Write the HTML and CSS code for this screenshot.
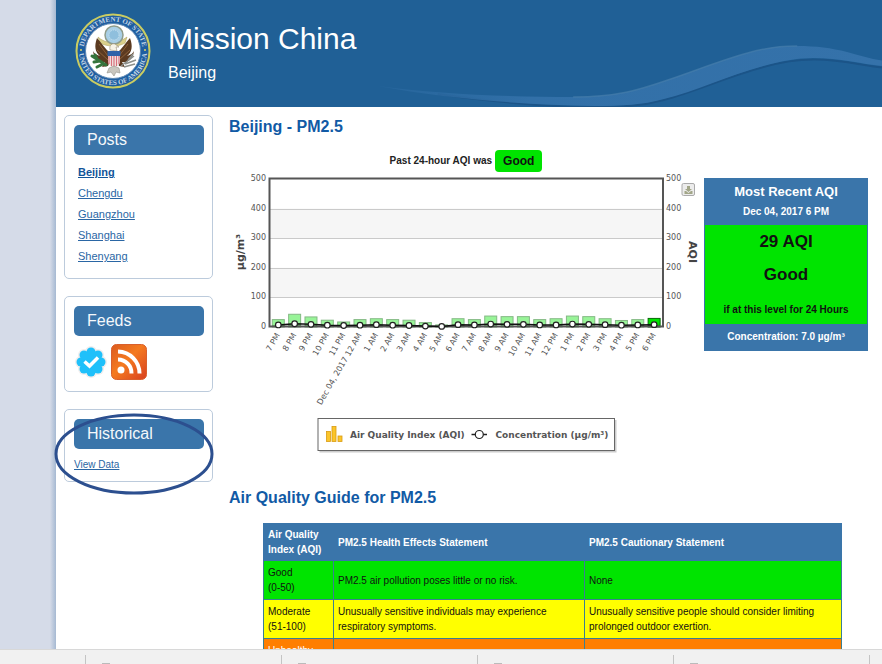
FILE: index.html
```html
<!DOCTYPE html>
<html lang="en">
<head>
<meta charset="utf-8">
<title>Mission China - Beijing Air Quality</title>
<link rel="stylesheet" href="styles.css">
</head>
<body>
<div class="viewport">
  <div class="page">
    <header class="banner">
      <svg class="wave" viewBox="0 0 506 107" preserveAspectRatio="none" aria-hidden="true">
        <defs>
          <linearGradient id="waveFill" x1="0" y1="0" x2="1" y2="0">
            <stop offset="0" stop-color="#2c6ba3" stop-opacity="0.5"/>
            <stop offset="0.3" stop-color="#3270a8"/>
            <stop offset="1" stop-color="#3572aa"/>
          </linearGradient>
        </defs>
        <path d="M60 94C110 101 170 107 217 107C245 107 265 106 287 100C320 91 350 77 387 67C405 62 420 59.500 437 59.500C462 59 485 65 506 67.500" fill="none" stroke="#1b5488" stroke-width="2"/>
        <path d="M0 86C60 94 130 97 196 97C240 97 262 90 291 80C318 71 345 60 371 53C388 48 405 46 421 46C440 46 455 48 471 52C483 55 494 59 506 60.500V66C485 64 465 58 437 58C420 58 405 61 387 66C350 76 320 91 287 99C265 105 245 106 217 106C150 105 70 99 0 86Z" fill="url(#waveFill)"/>
        <path d="M196 97C240 97 262 90 291 80C318 71 345 60 371 53C388 48 405 46 421 46" fill="none" stroke="#467dab" stroke-width="1.500" opacity="0.7"/>
      </svg>
      <svg class="seal" viewBox="0 0 76 76" role="img" aria-label="Department of State seal">
        <defs>
          <path id="arcTop" d="M8.500 38A29.500 29.500 0 0 1 67.500 38"/>
          <path id="arcBottom" d="M4 38A34 34 0 0 0 72 38"/>
        </defs>
        <circle cx="38" cy="38" r="36.500" fill="#1f5ea0" stroke="#c9cc62" stroke-width="2"/>
        <circle cx="38" cy="38" r="27.500" fill="#fff" stroke="#5c88b4" stroke-width="1"/>
        <text class="seal-text"><textPath href="#arcTop" startOffset="50%" text-anchor="middle">DEPARTMENT OF STATE</textPath></text>
        <text class="seal-text"><textPath href="#arcBottom" startOffset="50%" text-anchor="middle">UNITED STATES OF AMERICA</textPath></text>
        <circle cx="6" cy="37" r="1" fill="#e2d36a"/><circle cx="70" cy="37" r="1" fill="#e2d36a"/>
        <path d="M23 24C30 31 43 31 52 24L50 30C44 34 32 34 25 30Z" fill="#d9cf8a" stroke="#a89b55" stroke-width="0.500"/>
        <circle cx="39" cy="22" r="9" fill="#a9cfe6" stroke="#8f9c8c" stroke-width="1.500"/>
        <circle cx="39" cy="22" r="5" fill="#8fbfdd" stroke="#c9e2ef" stroke-width="1" stroke-dasharray="1 1"/>
        <path d="M35 40C30 36 26 29 22 25C19 33 20 39 25 43C21 42 19 40 18 38C19 46 24 50 30 49L27 54L33 53L35 48ZM42 40C47 36 51 29 55 25C58 33 57 39 52 43C56 42 58 40 59 38C58 46 53 50 47 49L50 54L44 53L42 48Z" fill="#5b3a20"/>
        <path d="M24 31L33 43M22 37L33 47M53 31L44 43M55 37L44 47" stroke="#8c6037" stroke-width="1"/>
        <path d="M35 37C34 32 37 30 40 31L44 34L41 34L42 38Z" fill="#f7f3e6" stroke="#84775f" stroke-width="0.500"/>
        <path d="M33 38H45V49Q44 53 39 55Q34 53 33 49Z" fill="#f3e9e7"/>
        <path d="M34 43V51M36.500 43V53M39 43V54.500M41.500 43V53M44 43V51" stroke="#d8707a" stroke-width="1.200"/>
        <path d="M32.500 38H45.500V43H32.500Z" fill="#2f62a8"/>
        <path d="M34 55L39 53L44 55L45 60L41 59L39 63L36 59L32 60Z" fill="#c9c6be" stroke="#96938b" stroke-width="0.600"/>
        <path d="M31 52L17 43M25 48L19 49M28 51L22 54M22 46L20 42" stroke="#35743c" stroke-width="3" stroke-linecap="round"/>
        <path d="M46 53L59 43M50 51L61 47M49 54L60 51M53 47L58 41" stroke="#8c8f8b" stroke-width="1.500"/>
      </svg>
      <div class="titles">
        <h1>Mission China</h1>
        <p>Beijing</p>
      </div>
    </header>
    <div class="columns">
      <aside class="sidebar">
        <section class="box posts">
          <h2>Posts</h2>
          <ul>
            <li><a class="current" href="#beijing">Beijing</a></li>
            <li><a href="#chengdu">Chengdu</a></li>
            <li><a href="#guangzhou">Guangzhou</a></li>
            <li><a href="#shanghai">Shanghai</a></li>
            <li><a href="#shenyang">Shenyang</a></li>
          </ul>
        </section>
        <section class="box feeds">
          <h2>Feeds</h2>
          <div class="icons">
            <a href="#verified" aria-label="Verified feed"><svg width="34" height="36" viewBox="0 0 34 36">
              <g fill="#f0eeee"><circle cx="17" cy="18" r="14"/><circle cx="17" cy="8" r="6"/><circle cx="24" cy="11" r="6"/><circle cx="27" cy="18" r="6"/><circle cx="24" cy="25" r="6"/><circle cx="17" cy="28" r="6"/><circle cx="10" cy="25" r="6"/><circle cx="7" cy="18" r="6"/><circle cx="10" cy="11" r="6"/></g>
              <g fill="#1fc0fa"><circle cx="17" cy="18" r="11"/><circle cx="17" cy="8" r="4.500"/><circle cx="24" cy="11" r="4.500"/><circle cx="27" cy="18" r="4.500"/><circle cx="24" cy="25" r="4.500"/><circle cx="17" cy="28" r="4.500"/><circle cx="10" cy="25" r="4.500"/><circle cx="7" cy="18" r="4.500"/><circle cx="10" cy="11" r="4.500"/></g>
              <path d="M10.500 17.500L15.500 22L24 13.500" fill="none" stroke="#fff" stroke-width="3.500"/>
            </svg></a>
            <a href="#rss" aria-label="RSS feed"><svg width="36" height="36" viewBox="0 0 36 36">
              <defs><linearGradient id="rssFill" x1="0" y1="0" x2="1" y2="1"><stop offset="0" stop-color="#dc5b1e"/><stop offset="0.450" stop-color="#f47a20"/><stop offset="1" stop-color="#d8401f"/></linearGradient></defs>
              <rect x="0.500" y="0.500" width="35" height="35" rx="5" fill="url(#rssFill)" stroke="#d9602c"/>
              <circle cx="10" cy="26" r="3.500" fill="#fff"/>
              <path d="M7 15.500A13.500 13.500 0 0 1 20.500 29.500M7 7.500A22 22 0 0 1 28.500 29.500" fill="none" stroke="#fff" stroke-width="4"/>
            </svg></a>
          </div>
        </section>
        <section class="box historical">
          <h2>Historical</h2>
          <a href="#data">View Data</a>
          <svg class="ring" viewBox="0 0 160 82" aria-hidden="true"><ellipse cx="80" cy="41" rx="78" ry="39" fill="none" stroke="#2c4f8f" stroke-width="3"/></svg>
        </section>
      </aside>
      <main>
        <h2 class="heading">Beijing - PM2.5</h2>
        <div class="summary">
          <div class="chart-block">
            <p class="past">Past 24-hour AQI was <span class="badge">Good</span></p>
            <svg id="chart" class="chart" viewBox="229 172 474 284" role="img" aria-label="Hourly PM2.5 concentration and AQI"></svg>
          </div>
          <section class="recent">
            <div class="recent-head"><h3>Most Recent AQI</h3><p>Dec 04, 2017 6 PM</p></div>
            <div class="recent-body"><p class="value">29 AQI</p><p class="value">Good</p><p class="note">if at this level for 24 Hours</p></div>
            <p class="recent-foot">Concentration: 7.0 µg/m³</p>
          </section>
        </div>
        <h2 class="heading">Air Quality Guide for PM2.5</h2>
        <table class="guide">
          <colgroup><col class="c-index"><col class="c-health"><col class="c-caution"></colgroup>
          <thead>
            <tr><th>Air Quality Index (AQI)</th><th>PM2.5 Health Effects Statement</th><th>PM2.5 Cautionary Statement</th></tr>
          </thead>
          <tbody>
            <tr class="good"><td>Good<br>(0-50)</td><td>PM2.5 air pollution poses little or no risk.</td><td>None</td></tr>
            <tr class="moderate"><td>Moderate<br>(51-100)</td><td>Unusually sensitive individuals may experience<br>respiratory symptoms.</td><td>Unusually sensitive people should consider limiting<br>prolonged outdoor exertion.</td></tr>
            <tr class="unhealthy"><td>Unhealthy</td><td></td><td></td></tr>
          </tbody>
        </table>
      </main>
    </div>
  </div>
</div>
<footer class="shelf"><span></span><span></span><span></span><span></span><span></span></footer>
<script src="chart.js"></script>
</body>
</html>
```
FILE: styles.css
```css
* { box-sizing: border-box; }
body {
  margin: 0;
  height: 100vh;
  display: flex;
  flex-direction: column;
  overflow: hidden;
  font-family: "Liberation Sans", Arial, sans-serif;
  font-size: 10px;
  color: #111;
  background: #d5dbe8;
}
h1, h2, h3, p, ul { margin: 0; padding: 0; font-weight: normal; }
a { color: #2a66a4; }

.viewport {
  flex: 1;
  min-height: 0;
  overflow: hidden;
  padding-left: 56px;
  background: linear-gradient(to right, #d5dbe8 50px, #a6b9d2 56px);
}
.page { background: #fff; min-height: 100%; }

.banner {
  position: relative;
  height: 107px;
  padding: 13px 0 0 19px;
  display: flex;
  gap: 17px;
  background: #206096;
  color: #fff;
}
.wave { position: absolute; right: 0; top: 0; width: 61%; height: 100%; }
.seal { width: 76px; height: 76px; }
.seal-text { font: bold 7px "Liberation Serif", serif; fill: #c3d5e6; }
.titles { position: relative; padding-top: 8px; }
.titles h1 { font-size: 30px; line-height: 36px; }
.titles p { font-size: 16px; line-height: 20px; margin-top: 6px; }

.columns { display: flex; gap: 16px; padding: 8px 14px 0 8px; }
.sidebar { flex: 0 0 149px; display: flex; flex-direction: column; gap: 17px; }
.box {
  position: relative;
  border: 1px solid #bccbdc;
  border-radius: 5px;
  padding: 9px 8px 8px 9px;
}
.box h2 {
  height: 30px;
  padding-left: 13px;
  border-radius: 5px;
  background: #3a75aa;
  color: #f4f8fb;
  font-size: 16px;
  line-height: 30px;
}
.posts { padding-bottom: 11px; }
.posts ul { list-style: none; padding: 7px 0 0 4px; font-size: 11px; }
.posts li { line-height: 21px; }
.posts .current { font-weight: bold; color: #125599; }
.icons { display: flex; gap: 3px; padding: 8px 0 3px; }
.icons a, .icons svg { display: block; }
.historical > a { display: block; line-height: 14px; margin-top: 9px; }
.historical { height: 73px; }
.ring { position: absolute; left: -11px; top: 3px; width: 160px; height: 82px; }

main { flex: 1; min-width: 0; }
.heading { font-size: 16px; line-height: 24px; font-weight: bold; color: #115aa5; }
.summary { display: flex; gap: 1px; margin-bottom: 30px; }
.chart-block { flex: 1; min-width: 0; padding-top: 11px; }
.past {
  display: flex;
  justify-content: center;
  gap: 3px;
  font-weight: bold;
  line-height: 22px;
  color: #222;
}
.badge {
  padding: 0 8px;
  border-radius: 4px;
  background: #00e400;
  color: #111;
  font-size: 12px;
}
.chart { display: block; width: 100%; font-family: "DejaVu Sans", Verdana, sans-serif; }
.tick { font-size: 8px; fill: #555; }
.axis-title { font-size: 11px; font-weight: bold; fill: #444; }
.legend { font-size: 9px; font-weight: bold; fill: #555; }

.recent {
  flex: 0 0 164px;
  align-self: flex-start;
  margin-top: 39px;
  border: 1px solid #3a75aa;
  background: #3a75aa;
  color: #fff;
  text-align: center;
  font-weight: bold;
}
.recent p, .recent h3 { font-weight: bold; }
.recent-head { height: 46px; padding-top: 4px; }
.recent-head h3 { font-size: 13px; line-height: 18px; }
.recent-head p { line-height: 22px; }
.recent-body { background: #00e400; color: #111; padding-bottom: 5px; }
.recent-body .value { font-size: 17px; line-height: 33px; }
.recent-body .note { line-height: 16px; margin-top: 11px; padding-bottom: 1px; }
.recent-foot { line-height: 26px; }

.guide {
  width: calc(100% - 60px);
  margin: 13px 0 0 34px;
  table-layout: fixed;
  border-collapse: collapse;
  line-height: 15px;
}
.c-index { width: 70px; }
.c-health { width: 251px; }
.guide th, .guide td { padding: 4px; border: 1px solid #3a7f93; text-align: left; }
.guide th { padding: 3px 4px; background: #3a75aa; border-color: #3a75aa; color: #fff; }
.good { background: #00e400; }
.moderate { background: #ffff00; }
.unhealthy { background: #ff7e00; color: #fff; }

.shelf {
  flex: 0 0 15px;
  display: flex;
  padding-left: 85px;
  overflow: hidden;
  background: #f1f1f1;
  border-top: 1px solid #d8d8d8;
}
.shelf span { flex: 0 0 196px; height: 9px; margin-top: 5px; border-left: 1px solid #c4c4c4; }
.shelf span::before { content: ""; display: block; width: 8px; height: 1px; margin: 8px 0 0 16px; background: #bbb; }
```
FILE: chart.js
```js
const hours = ["7 PM", "8 PM", "9 PM", "10 PM", "11 PM", "Dec 04, 2017 12 AM", "1 AM", "2 AM", "3 AM", "4 AM", "5 AM", "6 AM",
  "7 AM", "8 AM", "9 AM", "10 AM", "11 AM", "12 PM", "1 PM", "2 PM", "3 PM", "4 PM", "5 PM", "6 PM"];
const aqi = [25, 43, 34, 23, 17, 25, 28, 25, 23, 15, 7, 28, 25, 37, 35, 35, 25, 28, 37, 35, 28, 22, 25, 29];
const concentration = [7, 11, 9, 6, 5, 6, 8, 6, 5, 3, 2, 8, 7, 10, 9, 9, 7, 7, 10, 9, 8, 6, 7, 8];

const left = 270, right = 663, top0 = 179, bottom = 327;
const y = v => bottom - v * (bottom - top0) / 500;
const x = i => left + 8.3 + i * 16.34;
let out = "";

out += `<rect x="${left}" y="${y(400)}" width="${right - left}" height="${y(300) - y(400)}" fill="#f6f6f6"/>`;
out += `<rect x="${left}" y="${y(200)}" width="${right - left}" height="${y(100) - y(200)}" fill="#f6f6f6"/>`;
for (const v of [100, 200, 300, 400]) {
  const gy = Math.round(y(v)) + 0.5;
  out += `<path d="M${left} ${gy}H${right}" stroke="#cacaca"/>`;
}
aqi.forEach((v, i) => {
  const now = i === aqi.length - 1;
  out += `<rect x="${x(i) - 6}" y="${y(v)}" width="12" height="${bottom - y(v)}" fill="${now ? "#00e400" : "#98f498"}" stroke="${now ? "#066b06" : "#85b985"}"/>`;
  out += `<rect x="${x(i) - 6}" y="${y(concentration[i])}" width="12" height="${bottom - y(concentration[i])}" fill="#1b5a1b" opacity="0.35"/>`;
});
out += `<rect x="${left - 0.5}" y="${top0 - 0.5}" width="${right - left + 0.5}" height="${bottom - top0}" fill="none" stroke="#555" stroke-width="2"/>`;
out += `<polyline points="${concentration.map((v, i) => `${x(i)},${y(v)}`).join(" ")}" fill="none" stroke="#111" stroke-width="1.5"/>`;
concentration.forEach((v, i) => {
  out += `<circle cx="${x(i)}" cy="${y(v)}" r="2.8" fill="#fff" stroke="#222" stroke-width="1.2"/>`;
});
for (const v of [0, 100, 200, 300, 400, 500]) {
  out += `<text class="tick" x="266" y="${y(v) + 2}" text-anchor="end">${v}</text>`;
  out += `<text class="tick" x="666" y="${y(v) + 2}">${v}</text>`;
}
hours.forEach((label, i) => {
  out += `<text class="tick" text-anchor="end" transform="translate(${x(i) + 2} 335) rotate(-60)">${label}</text>`;
});
out += `<text class="axis-title" text-anchor="middle" transform="translate(244 252) rotate(-90)">µg/m³</text>`;
out += `<text class="axis-title" text-anchor="middle" transform="translate(689 252) rotate(90)">AQI</text>`;

out += `<rect x="682" y="183.5" width="12.5" height="12" rx="1.5" fill="#ececec" stroke="#aaa"/>
  <path d="M687 186H690V189H692L688.500 192L685 189H687ZM684.500 191H686L688.500 193L691 191H692.500V194H684.500Z" fill="#a2a688"/>`;

out += `<rect x="319.500" y="420" width="297" height="32.500" fill="#ccc"/>
  <rect x="318" y="418.500" width="296.500" height="32" fill="#fff" stroke="#666"/>
  <g fill="#fbc52a" stroke="#d99b12" stroke-width="0.8"><rect x="326.500" y="431.500" width="4" height="10"/><rect x="332" y="426.500" width="4" height="15"/><rect x="338" y="436" width="4" height="5.500"/></g>
  <text class="legend" x="350" y="438">Air Quality Index (AQI)</text>
  <path d="M471.500 434.500H487" stroke="#222" stroke-width="1.500"/>
  <circle cx="479.300" cy="434.500" r="4" fill="#fff" stroke="#222" stroke-width="1.200"/>
  <text class="legend" x="495.500" y="438">Concentration (µg/m³)</text>`;

document.getElementById("chart").innerHTML = out;
```
